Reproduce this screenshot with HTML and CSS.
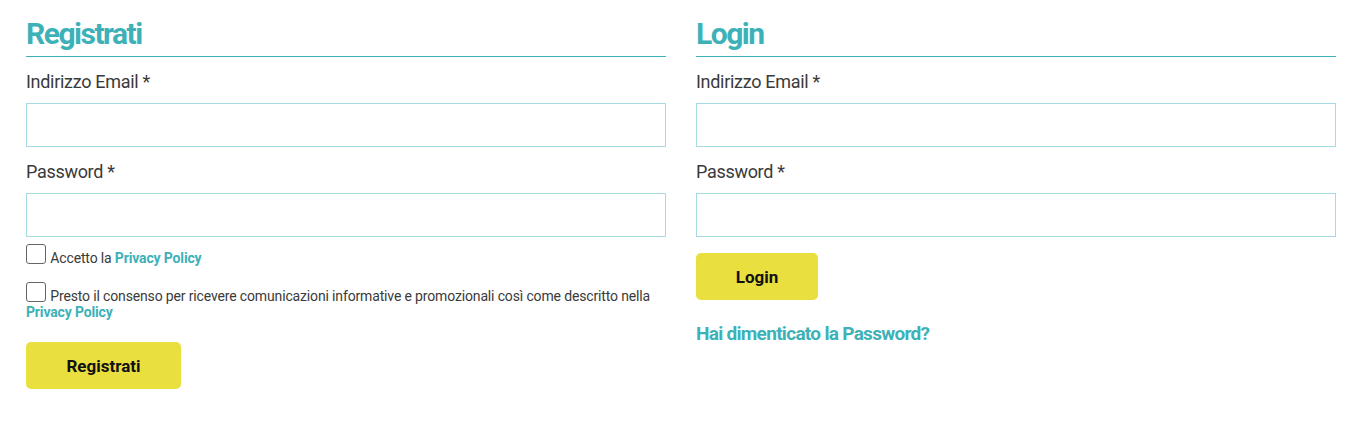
FILE: index.html
```html
<!DOCTYPE html>
<html lang="it">
  <head>
    <meta charset="UTF-8" />
    <meta name="viewport" content="width=device-width, initial-scale=1.0" />
    <title>Registrati / Login</title>
    <link rel="stylesheet" href="styles.css">
  </head>
  <body>
    <div class="account">
      <form class="col">
        <h2>Registrati</h2>
        <label class="field-label">Indirizzo Email *</label>
        <input type="email" class="field" />
        <label class="field-label">Password *</label>
        <input type="password" class="field" />

        <div class="check">
          <input type="checkbox" />
          Accetto la <a href="#">Privacy Policy</a>
        </div>
        <div class="check check-long">
          <input type="checkbox" />
          Presto il consenso per ricevere comunicazioni informative e promozionali così come descritto nella <a href="#">Privacy Policy</a>
        </div>

        <button type="button" class="btn btn-register">Registrati</button>
      </form>

      <form class="col">
        <h2>Login</h2>
        <label class="field-label">Indirizzo Email *</label>
        <input type="email" class="field" />
        <label class="field-label">Password *</label>
        <input type="password" class="field" />

        <button type="button" class="btn btn-login">Login</button>
        <a href="#" class="lost">Hai dimenticato la Password?</a>
      </form>
    </div>
  </body>
</html>
```

FILE: styles.css
```css
body {
  margin: 0;
  font-family: Roboto, "Liberation Sans", sans-serif;
  color: #3a3a3a;
  background: #fff;
}

.account {
  display: grid;
  grid-template-columns: 1fr 1fr;
  gap: 30px;
  padding: 16px 25px 0 26px;
}

.col {
  display: flex;
  flex-direction: column;
  align-items: flex-start;
}

h2 {
  align-self: stretch;
  margin: 0;
  padding-bottom: 4px;
  border-bottom: 1px solid #3db1b8;
  color: #3db1b8;
  font-size: 30px;
  font-weight: 700;
  letter-spacing: -1.5px;
  line-height: 36px;
}

.field-label {
  margin-top: 14px;
  font-size: 18px;
  line-height: 22px;
  letter-spacing: -0.3px;
}

.field {
  align-self: stretch;
  box-sizing: border-box;
  height: 44px;
  margin: 10px 0 0;
  border: 1px solid #a6dcdf;
  background: #fff;
  outline: none;
}

.check {
  font-size: 14px;
  line-height: 16px;
  letter-spacing: -0.15px;
  margin-top: 7px;
}

.check-long {
  margin-top: 16px;
}

.check input {
  appearance: none;
  box-sizing: border-box;
  display: inline-block;
  width: 20px;
  height: 20px;
  margin: 0 1px 0 0;
  border: 1px solid #666;
  border-radius: 3px;
  background: #fff;
  vertical-align: -1px;
}

.check a,
.lost {
  color: #3db1b8;
  font-weight: 700;
  text-decoration: none;
}

.btn {
  height: 47px;
  border: none;
  border-radius: 5px;
  background: #e9df3e;
  color: #111;
  font-family: inherit;
  font-size: 17px;
  font-weight: 700;
  cursor: pointer;
}

.btn-register {
  width: 155px;
  margin-top: 22px;
}

.btn-login {
  width: 122px;
  margin-top: 16px;
}

.lost {
  margin-top: 22px;
  font-size: 19px;
  line-height: 23px;
  letter-spacing: -0.7px;
}
```
